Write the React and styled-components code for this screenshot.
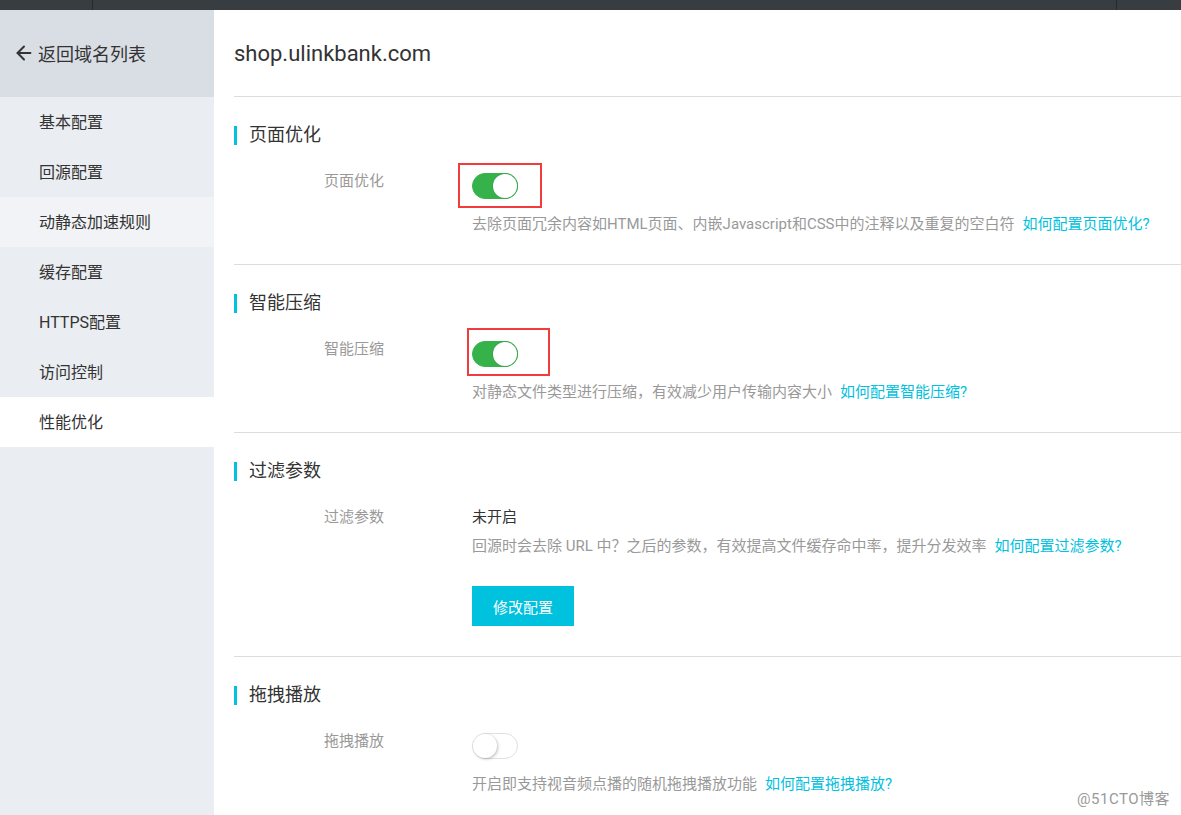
import React from 'react'
import styled, { createGlobalStyle } from 'styled-components'
import { ArrowLeft } from 'lucide-react'

const GlobalStyle = createGlobalStyle`
  html, body { margin: 0; padding: 0; height: 100%; overflow: hidden; }
  body { font-family: Roboto, "Noto Sans CJK SC", sans-serif; color: #333; background: #fff; }
  #root { height: 100%; }
`

const menu = ['基本配置', '回源配置', '动静态加速规则', '缓存配置', 'HTTPS配置', '访问控制', '性能优化']

const sections = [
  {
    title: '页面优化',
    label: '页面优化',
    toggle: true,
    mark: { left: -14, top: -10, width: 84, height: 45 },
    desc: '去除页面冗余内容如HTML页面、内嵌Javascript和CSS中的注释以及重复的空白符',
    link: '如何配置页面优化?',
  },
  {
    title: '智能压缩',
    label: '智能压缩',
    toggle: true,
    mark: { left: -5, top: -13, width: 83, height: 48 },
    desc: '对静态文件类型进行压缩，有效减少用户传输内容大小',
    link: '如何配置智能压缩?',
  },
  {
    title: '过滤参数',
    label: '过滤参数',
    value: '未开启',
    desc: '回源时会去除 URL 中？之后的参数，有效提高文件缓存命中率，提升分发效率',
    link: '如何配置过滤参数?',
    button: '修改配置',
  },
  {
    title: '拖拽播放',
    label: '拖拽播放',
    toggle: false,
    desc: '开启即支持视音频点播的随机拖拽播放功能',
    link: '如何配置拖拽播放?',
  },
]

const App = () => {
  return (
    <Page>
      <GlobalStyle />
      <TopBar>
        <TopSeg $w="92px" />
        <TopSeg $grow />
        <TopSeg $last />
      </TopBar>
      <Body>
        <Sidebar>
          <BackLink>
            <ArrowLeft size={22} strokeWidth={2.2} />
            <span>返回域名列表</span>
          </BackLink>
          <Menu>
            {menu.map((m, i) => (
              <MenuItem key={m} $active={i === 6} $hover={i === 2}>{m}</MenuItem>
            ))}
          </Menu>
        </Sidebar>
        <Main>
          <Domain>shop.ulinkbank.com</Domain>
          {sections.map((s) => (
            <Section key={s.title}>
              <SectionTitle>{s.title}</SectionTitle>
              <FormRow>
                <Label>{s.label}</Label>
                <Control>
                  {s.value ? (
                    <Value>{s.value}</Value>
                  ) : (
                    <SwitchWrap>
                      <Switch $on={s.toggle}><Knob $on={s.toggle} /></Switch>
                      {s.mark && (
                        <Mark
                          style={{
                            left: s.mark.left,
                            top: s.mark.top,
                            width: s.mark.width,
                            height: s.mark.height,
                          }}
                        />
                      )}
                    </SwitchWrap>
                  )}
                  <Desc $tight={!!s.value}>
                    {s.desc}
                    <Link>{s.link}</Link>
                  </Desc>
                  {s.button && <Button>{s.button}</Button>}
                </Control>
              </FormRow>
            </Section>
          ))}
        </Main>
      </Body>
      <Watermark>@51CTO博客</Watermark>
    </Page>
  )
}

const Page = styled.div`
  position: relative;
  height: 100%;
  display: flex;
  flex-direction: column;
`

const TopBar = styled.div`
  height: 10px;
  display: flex;
  background: #373d41;
  flex-shrink: 0;
`

const TopSeg = styled.div`
  width: ${(p) => p.$w || 'auto'};
  flex: ${(p) => (p.$grow ? 1 : p.$last ? '0 0 64px' : 'none')};
  border-right: ${(p) => (p.$last ? 'none' : '1px solid #262a2d')};
`

const Body = styled.div`
  flex: 1;
  display: flex;
  min-height: 0;
`

const Sidebar = styled.aside`
  width: 214px;
  flex-shrink: 0;
  background: #eaedf1;
  display: flex;
  flex-direction: column;
`

const BackLink = styled.div`
  height: 87px;
  background: #d9dde4;
  display: flex;
  align-items: center;
  gap: 3px;
  padding-left: 13px;
  padding-bottom: 2px;
  box-sizing: border-box;
  font-size: 18px;
  color: #333;
  svg { color: #333; }
`

const Menu = styled.ul`
  list-style: none;
  margin: 0;
  padding: 0;
`

const MenuItem = styled.li`
  height: 50px;
  box-sizing: border-box;
  display: flex;
  align-items: center;
  padding-left: 39px;
  padding-bottom: 3px;
  font-size: 16px;
  color: #333;
  background: ${(p) => (p.$active ? '#fff' : p.$hover ? '#f1f3f6' : 'transparent')};
`

const Main = styled.main`
  flex: 1;
  padding-left: 20px;
  overflow: hidden;
`

const Domain = styled.h1`
  margin: 0;
  height: 87px;
  display: flex;
  align-items: center;
  box-sizing: border-box;
  font-size: 22px;
  font-weight: 400;
  color: #333;
  border-bottom: 1px solid #dddddd;
`

const Section = styled.section`
  padding: 25px 0 30px;
  border-bottom: 1px solid #dddddd;
`

const SectionTitle = styled.h2`
  margin: 0;
  height: 26px;
  line-height: 26px;
  font-size: 18px;
  font-weight: 400;
  color: #333;
  display: flex;
  align-items: center;
  &::before {
    content: '';
    width: 3px;
    height: 19px;
    background: #00c1de;
    margin-right: 12px;
  }
`

const FormRow = styled.div`
  display: grid;
  grid-template-columns: 238px 1fr;
  margin-top: 23px;
`

const Label = styled.div`
  padding-left: 90px;
  font-size: 15px;
  line-height: 20px;
  color: #999;
`

const Control = styled.div`
  display: flex;
  flex-direction: column;
  align-items: flex-start;
`

const Value = styled.div`
  font-size: 15px;
  line-height: 20px;
  color: #333;
`

const SwitchWrap = styled.div`
  position: relative;
  margin-top: 2px;
`

const Switch = styled.div`
  width: 46px;
  height: 26px;
  box-sizing: border-box;
  border-radius: 13px;
  background: ${(p) => (p.$on ? '#35b34a' : '#fff')};
  border: 1px solid ${(p) => (p.$on ? '#35b34a' : '#e0e0e0')};
  position: relative;
`

const Knob = styled.span`
  position: absolute;
  top: 0;
  left: ${(p) => (p.$on ? '20px' : '0')};
  width: 24px;
  height: 24px;
  border-radius: 50%;
  background: #fff;
  box-shadow: ${(p) => (p.$on ? '0 0 0 1px #3aa84c' : '1px 1px 3px rgba(0,0,0,0.25)')};
`

const Mark = styled.span`
  position: absolute;
  border: 2px solid #f03c3c;
  box-sizing: border-box;
  pointer-events: none;
`

const Desc = styled.p`
  margin: ${(p) => (p.$tight ? '9px' : '15px')} 0 0;
  font-size: 15px;
  line-height: 20px;
  color: #999;
  white-space: nowrap;
`

const Link = styled.a`
  color: #00c1de;
  margin-left: 8px;
  cursor: pointer;
`

const Button = styled.button`
  margin-top: 30px;
  width: 102px;
  height: 40px;
  border: none;
  background: #00c1de;
  color: #fff;
  font-family: inherit;
  font-size: 15px;
  cursor: pointer;
`

const Watermark = styled.div`
  position: absolute;
  right: 11px;
  bottom: 7px;
  font-size: 15px;
  letter-spacing: 0.5px;
  color: #999;
`

export default App
